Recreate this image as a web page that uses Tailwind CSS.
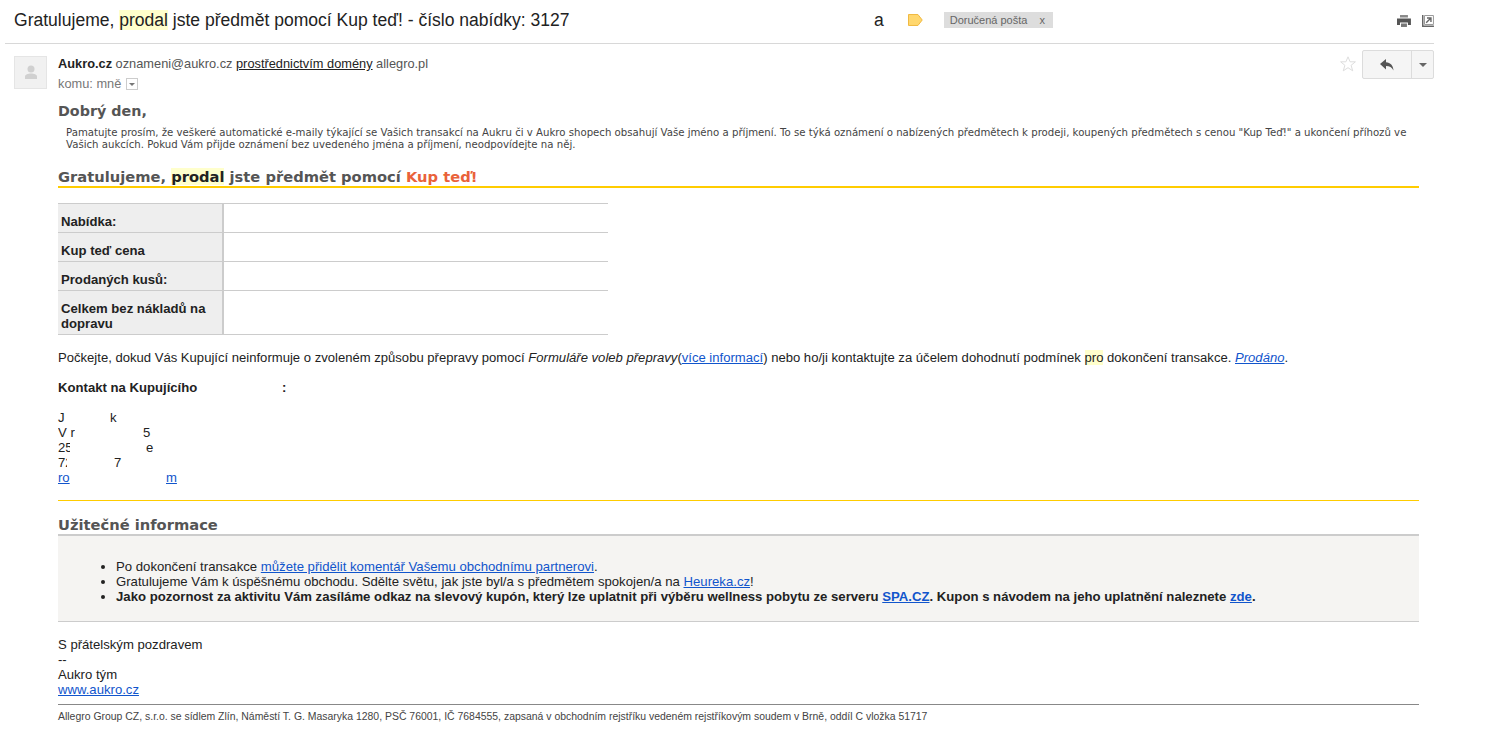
<!DOCTYPE html>
<html lang="cs">
<head>
  <meta charset="utf-8" />
  <meta content="width=device-width, initial-scale=1.0" name="viewport" />
  <title>Doručená pošta</title>
  <script src="https://cdn.jsdelivr.net/npm/@tailwindcss/browser@4"></script>
</head>
<body class="bg-white text-black font-['Liberation_Sans',Arial,sans-serif] overflow-hidden">
  <div class="w-[1490px] h-[739px] overflow-hidden">
    <!-- Subject bar -->
    <div class="ml-[5px] w-[1429px] h-[44px] border-b border-[#d8d8d8] flex items-center relative">
      <div class="ml-[9px] w-[559px] overflow-hidden whitespace-nowrap text-[17.550px] leading-[24px] text-[#222] -mt-[3px]">Gratulujeme, <span class="bg-[#ffffcc]">prodal</span> jste předmět pomocí Kup teď! - číslo nabídky: 31275</div>
      <div class="ml-[304px] w-[10px] text-[17.550px] leading-[24px] text-[#222] -mt-[3px]">a</div>
      <svg class="ml-[24px] -mt-[3px]" width="15" height="12" viewBox="0 0 15 12"><path d="M.5.5h9.500l4.300 5.500-4.300 5.500h-9.500z" fill="#ffd76e" stroke="#f0b840"/></svg>
      <div class="ml-[21px] -mt-[3px] w-[110px] h-[16px] bg-[#dddddd] flex items-center text-[11px] text-[#666] pl-[6px] relative">
        <span>Doručená pošta</span><span class="ml-[12px]">x</span>
      </div>
      <svg class="ml-[344px] -mt-[1px]" width="14" height="12" viewBox="0 0 14 12"><path d="M3 0h8v2.500H3z" fill="#888"/><path d="M0 3.500h14V10h-3V7.500H3V10H0z" fill="#555"/><path d="M4 8.500h6V12H4z" fill="#777"/></svg>
      <svg class="ml-[11px] -mt-[1px]" width="12" height="12" viewBox="0 0 12 12"><path d="M0 0h1.500v10.500H12V12H0z" fill="#666"/><path d="M2.500.5h9v9h-9z" fill="#fff" stroke="#999"/><path d="M5 3h4v4M8.700 3.300L4.200 7.800" fill="none" stroke="#666" stroke-width="1.400"/></svg>
    </div>

    <!-- Sender row -->
    <div class="w-[1434px] flex h-[52px]">
      <div class="w-[58px] pl-[14px] pt-[12px] shrink-0">
        <div class="w-[33px] h-[33px] bg-[#f1f1f1] border border-[#e5e5e5] flex items-center justify-center">
          <svg width="14" height="15" viewBox="0 0 14 15"><circle cx="7" cy="4" r="3.500" fill="#d0d0d0"/><path d="M1 14v-2.500C1 9.500 4 8.500 7 8.500s6 1 6 3V14z" fill="#d0d0d0"/></svg>
        </div>
      </div>
      <div class="flex-1 pt-[12px]">
        <div class="text-[12.800px] leading-[16px] text-[#555] whitespace-nowrap"><b class="text-[#222]">Aukro.cz</b> oznameni@aukro.cz <span class="text-[#222] underline">prostřednictvím domény</span> allegro.pl</div>
        <div class="mt-[4px] flex items-center text-[12.800px] leading-[16px] text-[#777]">komu: mně
          <span class="ml-[5px] w-[12px] h-[12px] border border-[#ccc] flex items-center justify-center"><span class="border-x-[3px] border-x-transparent border-t-[3px] border-t-[#777]"></span></span>
        </div>
      </div>
      <svg class="mt-[12px] mr-[6px]" width="16" height="16" viewBox="0 0 16 16"><path d="M8 .8l2.100 5h5.300l-4.300 3.500 1.600 5.500L8 11.700l-4.700 3.100 1.600-5.500L.6 5.800h5.300z" fill="#fff" stroke="#ddd"/></svg>
      <div class="mt-[6px] w-[72px] h-[29px] bg-[#f5f5f5] border border-[#dcdcdc] rounded-[2px] flex">
        <div class="w-[49px] border-r border-[#dcdcdc] flex items-center justify-center">
          <svg width="14" height="12" viewBox="0 0 14 12"><path d="M6 0v3.300c4.500.3 7 3.200 7.500 8.200C12 8.500 9.500 7.200 6 7.100V10.500L0 5z" fill="#555"/></svg>
        </div>
        <div class="flex-1 flex items-center justify-center"><span class="border-x-[4px] border-x-transparent border-t-[4px] border-t-[#666]"></span></div>
      </div>
    </div>

    <!-- Message body -->
    <div class="ml-[58px] w-[1361px]">
      <h1 class="font-['DejaVu_Sans',sans-serif] font-bold text-[14.300px] leading-[20px] text-[#555] mt-[5px]">Dobrý den,</h1>
      <p class="mt-[6px] pl-[8px] font-['DejaVu_Sans',sans-serif] text-[10.170px] leading-[12px] text-[#444] whitespace-nowrap">Pamatujte prosím, že veškeré automatické e-maily týkající se Vašich transakcí na Aukru či v Aukro shopech obsahují Vaše jméno a příjmení. To se týká oznámení o nabízených předmětech k prodeji, koupených předmětech s cenou "Kup Teď!" a ukončení příhozů ve<br />Vašich aukcích. Pokud Vám přijde oznámení bez uvedeného jména a příjmení, neodpovídejte na něj.</p>

      <h2 class="mt-[16px] h-[21px] border-b-2 border-[#ffcc00] font-['DejaVu_Sans',sans-serif] font-bold text-[14.700px] leading-[20px] text-[#555]">Gratulujeme, <span class="bg-[#ffffcc] text-[#222]">prodal</span> jste předmět pomocí <span class="text-[#e9623a]">Kup teď!</span></h2>

      <table class="mt-[15px] w-[550px] border-collapse text-[13.130px] leading-[15px] text-[#222]">
        <tbody>
          <tr class="h-[29px] border-t border-[#ccc]"><th class="w-[165px] bg-[#eeeeee] text-left align-bottom font-bold px-[3px] pb-[3px]">Nabídka:</th><td class="border-l-2 border-[#ccc]"></td></tr>
          <tr class="h-[29px] border-t border-[#ccc]"><th class="bg-[#eeeeee] text-left align-bottom font-bold px-[3px] pb-[3px]">Kup teď cena</th><td class="border-l-2 border-[#ccc]"></td></tr>
          <tr class="h-[29px] border-t border-[#ccc]"><th class="bg-[#eeeeee] text-left align-bottom font-bold px-[3px] pb-[3px]">Prodaných kusů:</th><td class="border-l-2 border-[#ccc]"></td></tr>
          <tr class="h-[44px] border-y border-[#ccc]"><th class="bg-[#eeeeee] text-left align-bottom font-bold px-[3px] pb-[3px]">Celkem bez nákladů na dopravu</th><td class="border-l-2 border-[#ccc]"></td></tr>
        </tbody>
      </table>

      <p class="mt-[15px] text-[13.090px] leading-[15px] whitespace-nowrap text-[#222]">Počkejte, dokud Vás Kupující neinformuje o zvoleném způsobu přepravy pomocí <i>Formuláře voleb přepravy</i>(<a class="text-[#1155cc] underline">více informací</a>) nebo ho/ji kontaktujte za účelem dohodnutí podmínek <span class="bg-[#ffffcc]">pro</span> dokončení transakce. <a class="text-[#1155cc] underline italic">Prodáno</a>.</p>

      <p class="mt-[15px] text-[13.130px] leading-[15px] font-bold text-[#222] flex"><span class="w-[224px]">Kontakt na Kupujícího</span><span>:</span></p>

      <!-- Buyer contact, mostly blanked out in the source -->
      <div class="mt-[15px] text-[13.130px] leading-[15px] text-[#222]">
        <div class="flex"><span class="w-[52px]">J</span><span>k</span></div>
        <div class="flex"><span class="w-[17px] overflow-hidden whitespace-nowrap">V r</span><span class="ml-[68px]">5</span></div>
        <div class="flex"><span class="w-[12px] overflow-hidden whitespace-nowrap">25</span><span class="ml-[76px]">e</span></div>
        <div class="flex"><span class="w-[9px] overflow-hidden whitespace-nowrap">72</span><span class="ml-[47px]">7</span></div>
        <div class="flex text-[#1155cc] underline"><span class="w-[12px] overflow-hidden whitespace-nowrap">ro</span><span class="ml-[96px]">m</span></div>
      </div>

      <div class="mt-[15px] h-px bg-[#ffcc00]"></div>

      <h2 class="mt-[15px] font-['DejaVu_Sans',sans-serif] font-bold text-[14.700px] leading-[18px] text-[#555]">Užitečné informace</h2>
      <div class="h-[88px] bg-[#f5f4f2] border-t-2 border-b border-t-[#ccc] border-b-[#ccc] pt-[23px]">
        <ul class="list-disc pl-[58px] text-[13.160px] leading-[15px] text-[#222]">
          <li>Po dokončení transakce <a class="text-[#1155cc] underline">můžete přidělit komentář Vašemu obchodnímu partnerovi</a>.</li>
          <li>Gratulujeme Vám k úspěšnému obchodu. Sdělte světu, jak jste byl/a s předmětem spokojen/a na <a class="text-[#1155cc] underline">Heureka.cz</a>!</li>
          <li class="font-bold">Jako pozornost za aktivitu Vám zasíláme odkaz na slevový kupón, který lze uplatnit při výběru wellness pobytu ze serveru <a class="text-[#1155cc] underline">SPA.CZ</a>. Kupon s návodem na jeho uplatnění naleznete <a class="text-[#1155cc] underline">zde</a>.</li>
        </ul>
      </div>

      <div class="mt-[15px] text-[13.130px] leading-[15px] text-[#222]">
        <div>S přátelským pozdravem</div>
        <div>--</div>
        <div>Aukro tým</div>
        <a class="text-[#1155cc] underline">www.aukro.cz</a>
      </div>

      <div class="mt-[7px] border-t border-[#888] pt-[5px] text-[10.450px] leading-[14px] text-[#444]">Allegro Group CZ, s.r.o. se sídlem Zlín, Náměstí T. G. Masaryka 1280, PSČ 76001, IČ 7684555, zapsaná v obchodním rejstříku vedeném rejstříkovým soudem v Brně, oddíl C vložka 51717</div>
    </div>
  </div>
</body>
</html>
